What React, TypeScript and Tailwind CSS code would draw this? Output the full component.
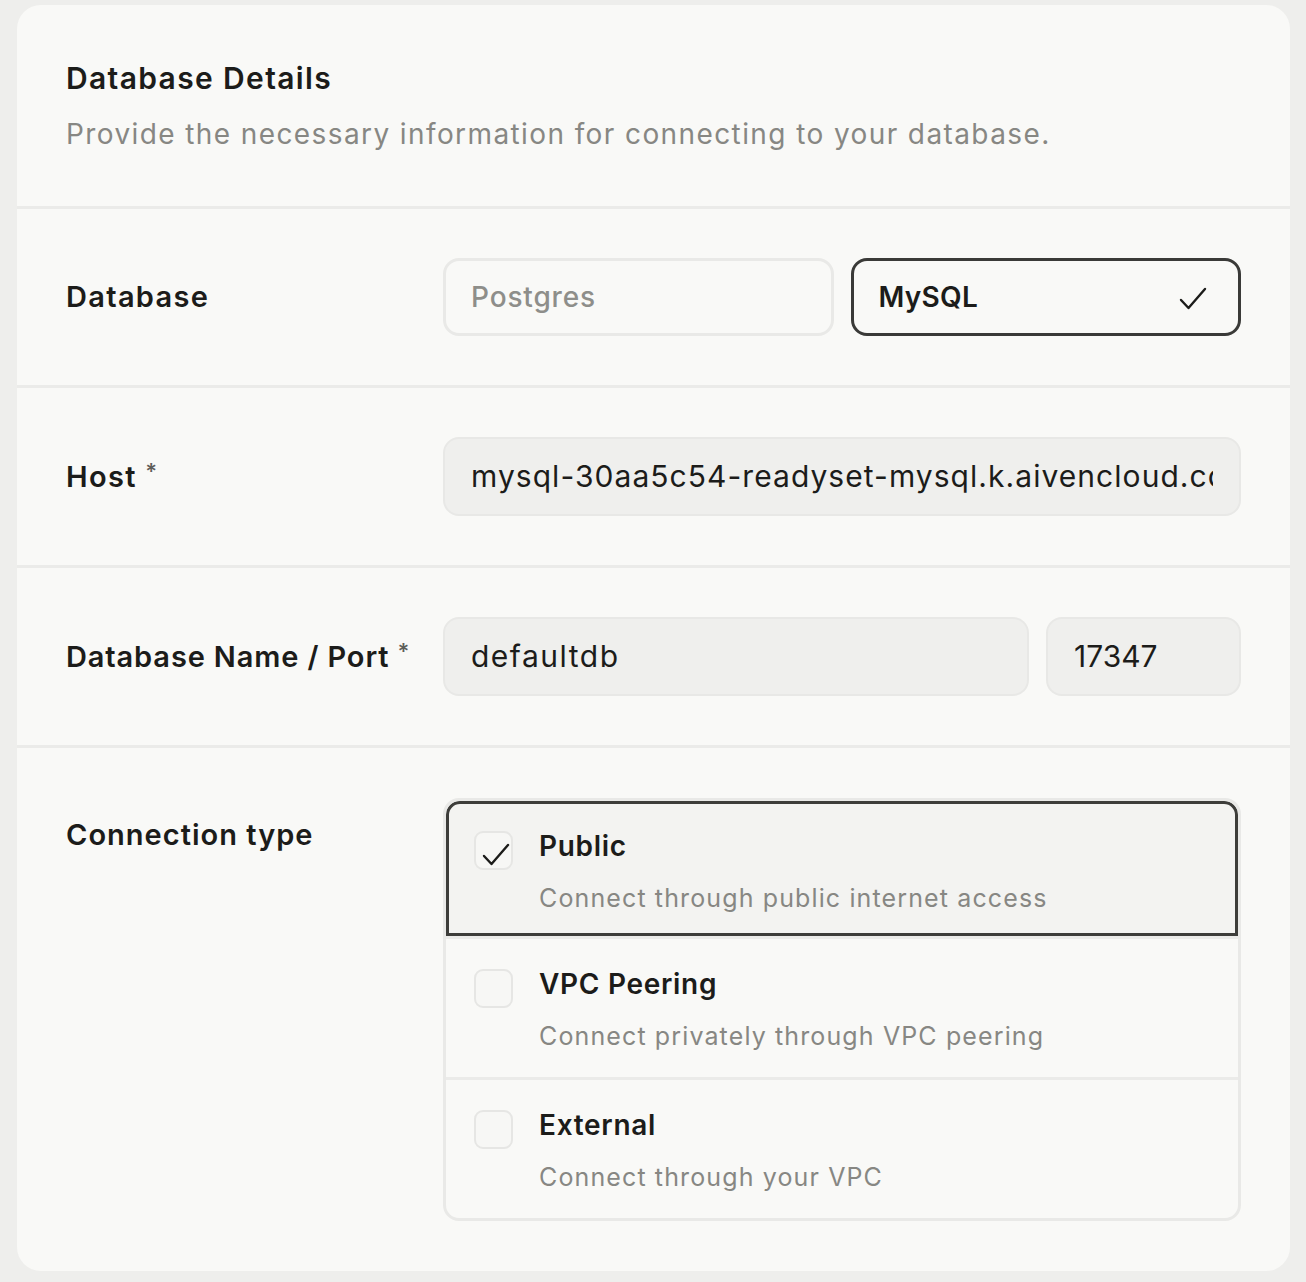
import React, { useState } from 'react';

const font = { fontFamily: 'Inter, "Noto Sans", sans-serif' };

function Check({ className }: { className?: string }) {
  return (
    <svg className={className} viewBox="0 0 28 24" fill="none" stroke="currentColor" strokeWidth={2.4} strokeLinecap="round" strokeLinejoin="round">
      <path d="M2 13l7.5 8L26 2" />
    </svg>
  );
}

const options = [
  { id: 'public', title: 'Public', desc: 'Connect through public internet access' },
  { id: 'vpc', title: 'VPC Peering', desc: 'Connect privately through VPC peering' },
  { id: 'external', title: 'External', desc: 'Connect through your VPC' },
];

export default function App() {
  const [db, setDb] = useState<'postgres' | 'mysql'>('mysql');
  const [conn, setConn] = useState('public');

  return (
    <div className="w-[1306px] h-[1282px] bg-[#eeeeec] pt-[5px] pl-[17px] pr-[16px]" style={font}>
      <div className="rounded-[24px] bg-[#f9f9f7] text-[#1c1c1a]">
        {/* Header */}
        <div className="px-[49px] pt-[53px] pb-[54px] border-b-[3px] border-[#ebebe9]">
          <h1 className="text-[30px] leading-[40px] font-semibold tracking-[0.045em]">Database Details</h1>
          <p className="mt-[18px] text-[28px] leading-[36px] text-[#878783] tracking-[0.05em]">
            Provide the necessary information for connecting to your database.
          </p>
        </div>

        {/* Database */}
        <div className="grid grid-cols-[377px_minmax(0,1fr)] items-center px-[49px] py-[49px] border-b-[3px] border-[#ebebe9]">
          <div className="text-[29px] font-semibold tracking-[0.045em]">Database</div>
          <div className="grid grid-cols-2 gap-[17px]">
            <button
              onClick={() => setDb('postgres')}
              className={`h-[78px] rounded-[16px] border-[3px] px-[25px] flex items-center justify-between text-left text-[28px] tracking-[0.03em] ${db === 'postgres' ? 'border-[#3a3a38] text-[#1c1c1a] font-semibold' : 'border-[#e9e9e7] text-[#8e8e8a] font-medium'}`}
            >
              Postgres
              {db === 'postgres' && <Check className="w-[28px] h-[24px] mr-[6px]" />}
            </button>
            <button
              onClick={() => setDb('mysql')}
              className={`h-[78px] rounded-[16px] border-[3px] px-[25px] flex items-center justify-between text-left text-[28px] tracking-[0.01em] ${db === 'mysql' ? 'border-[#3a3a38] text-[#1c1c1a] font-semibold' : 'border-[#e9e9e7] text-[#8e8e8a] font-medium'}`}
            >
              MySQL
              {db === 'mysql' && <Check className="w-[28px] h-[24px] mr-[6px] mt-[4px]" />}
            </button>
          </div>
        </div>

        {/* Host */}
        <div className="grid grid-cols-[377px_minmax(0,1fr)] items-center px-[49px] py-[49px] border-b-[3px] border-[#ebebe9]">
          <div className="text-[29px] font-semibold tracking-[0.045em]">
            Host <span className="text-[#5e5e5a] text-[22px] align-top">*</span>
          </div>
          <div className="min-w-0 h-[79px] rounded-[16px] bg-[#efefed] border-[2px] border-[#e8e8e6] px-[26px] flex items-center">
            <div className="min-w-0 overflow-hidden whitespace-nowrap text-[30px] tracking-[0.035em] text-[#1c1c1a]">
              mysql-30aa5c54-readyset-mysql.k.aivencloud.com
            </div>
          </div>
        </div>

        {/* Name / Port */}
        <div className="grid grid-cols-[377px_minmax(0,1fr)] items-center px-[49px] py-[49px] border-b-[3px] border-[#ebebe9]">
          <div className="text-[29px] font-semibold whitespace-nowrap tracking-[0.03em]">
            Database Name / Port <span className="text-[#5e5e5a] text-[22px] align-top">*</span>
          </div>
          <div className="grid grid-cols-[minmax(0,1fr)_195px] gap-[17px]">
            <div className="h-[79px] rounded-[16px] bg-[#efefed] border-[2px] border-[#e8e8e6] px-[26px] flex items-center text-[30px] tracking-[0.05em]">
              defaultdb
            </div>
            <div className="h-[79px] rounded-[16px] bg-[#efefed] border-[2px] border-[#e8e8e6] px-[26px] flex items-center text-[30px]">
              17347
            </div>
          </div>
        </div>

        {/* Connection type */}
        <div className="grid grid-cols-[377px_minmax(0,1fr)] items-start px-[49px] pt-[50px] pb-[50px]">
          <div className="pt-[19px] text-[29px] leading-[36px] font-semibold tracking-[0.035em]">Connection type</div>
          <div className="rounded-[16px] border-[3px] border-[#e9e9e7] overflow-hidden">
            {options.map((o, i) => {
              const active = conn === o.id;
              return (
                <button
                  key={o.id}
                  onClick={() => setConn(o.id)}
                  className={`w-full flex items-start gap-[26px] text-left ${active ? 'h-[135px] pl-[25px] pt-[27px] bg-[#f3f3f1] border-[3px] border-[#3d3d3a] rounded-t-[14px]' : 'h-[141px] pl-[28px] pt-[30px]'} ${i > 0 && !active ? 'border-t-[3px] border-[#ebebe9]' : ''}`}
                >
                  <span className="relative w-[39px] h-[39px] shrink-0 rounded-[9px] border-[2px] border-[#e6e6e4] bg-[#f7f7f5]">
                    {active && <Check className="absolute left-[6px] top-[10px] w-[28px] h-[24px] text-[#1c1c1a]" />}
                  </span>
                  <span className="flex flex-col">
                    <span className="text-[28px] leading-[30px] font-semibold text-[#1c1c1a] tracking-[0.025em]">{o.title}</span>
                    <span className="mt-[22px] text-[25px] leading-[30px] text-[#878783] tracking-[0.045em]">{o.desc}</span>
                  </span>
                </button>
              );
            })}
          </div>
        </div>
      </div>
    </div>
  );
}
